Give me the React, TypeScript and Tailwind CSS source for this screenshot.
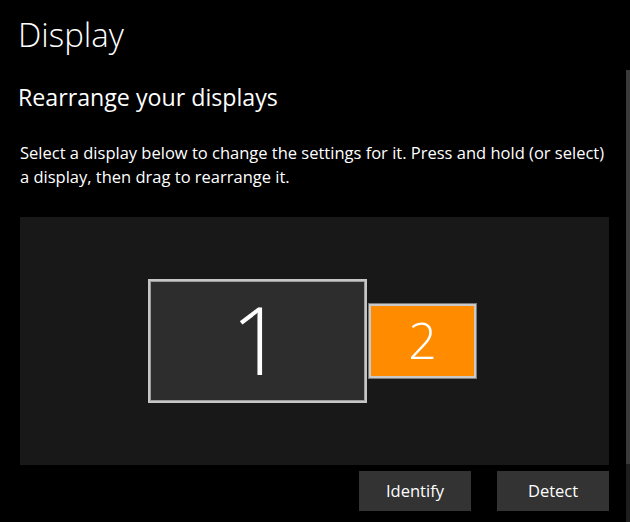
const font = { fontFamily: '"Open Sans", "Liberation Sans", sans-serif' };

function Monitor({ label, primary }: { label: string; primary?: boolean }) {
  if (primary) {
    return (
      <div className="flex h-[124px] w-[219px] items-center justify-center border-2 border-[#c6c6c6] bg-[#2d2d2d] shadow-[inset_0_0_0_1px_#9c9c9c]">
        <span className="mt-[-4px] text-[94px] font-light leading-none text-white">{label}</span>
      </div>
    );
  }
  return (
    <div className="flex h-[76px] w-[109px] items-center justify-center border-[3px] border-[#c9c9c9] bg-[#ff8c00] outline outline-1 outline-[#7a7a7a] -outline-offset-1">
      <span className="mt-[-2px] text-[50px] font-light leading-none text-white">{label}</span>
    </div>
  );
}

export default function App() {
  return (
    <div className="flex h-[522px] w-[630px] overflow-hidden bg-black text-white" style={font}>
      <div className="flex w-[626px] flex-col pl-[20px] pr-[17px]">
        <h1 className="ml-[-2px] mt-[13px] text-[33px] font-light leading-[44px]">Display</h1>
        <h2 className="ml-[-2px] mt-[25px] text-[23.2px] leading-[30px]">Rearrange your displays</h2>
        <p className="mt-[29px] whitespace-nowrap text-[16.5px] leading-[24px]">
          Select a display below to change the settings for it. Press and hold (or select)
          <br />
          a display, then drag to rearrange it.
        </p>
        <div className="mt-[28px] flex h-[248px] items-center justify-center gap-[1px] bg-[#181818] pr-[4px]">
          <Monitor label="1" primary />
          <Monitor label="2" />
        </div>
        <div className="mt-[6px] flex justify-end gap-[26px]">
          <button type="button" className="h-[40px] w-[112px] bg-[#333333] text-[16.5px] text-white">
            Identify
          </button>
          <button type="button" className="h-[40px] w-[112px] bg-[#333333] text-[16.5px] text-white">
            Detect
          </button>
        </div>
      </div>
      <div className="flex w-[4px] flex-col">
        <div className="h-[70px]" />
        <div className="h-[394px] bg-[#3a3a3a]" />
        <div className="flex-1 bg-[#1e1e1e]" />
      </div>
    </div>
  );
}
